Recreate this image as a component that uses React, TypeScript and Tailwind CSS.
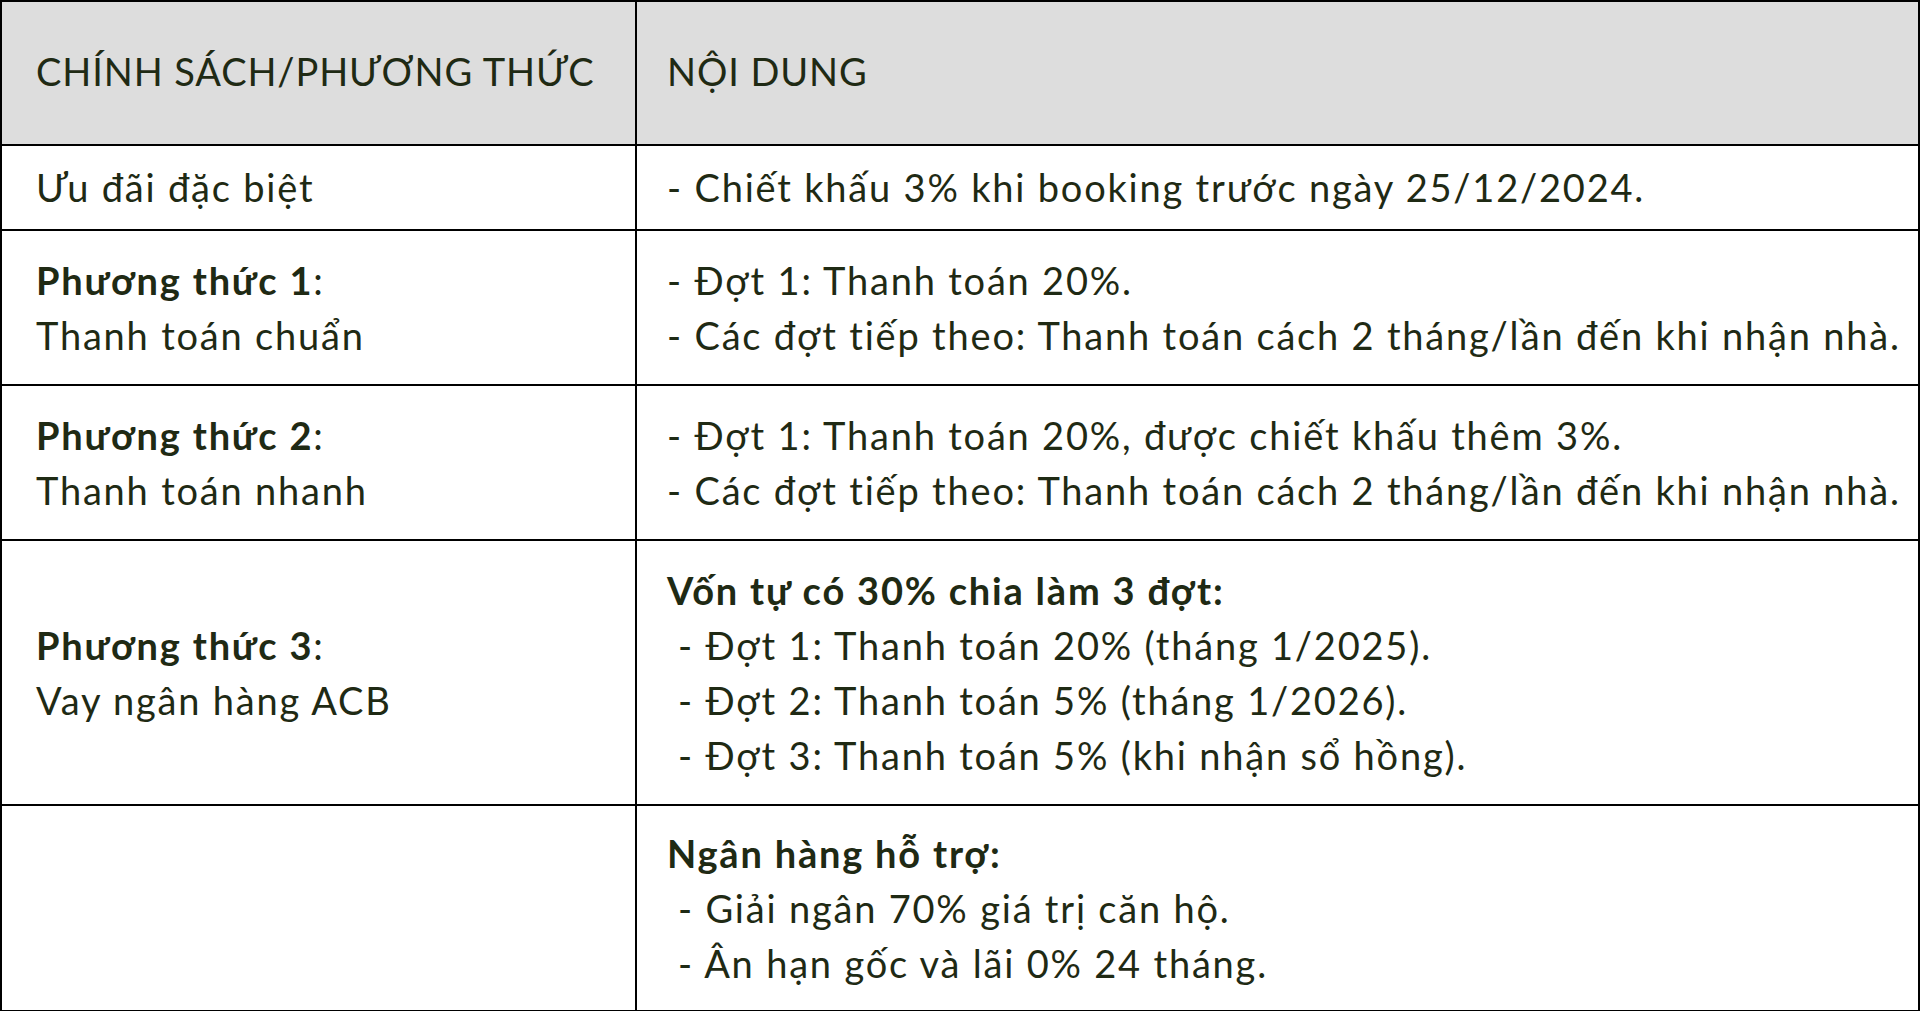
import React from 'react';

const left = 'border-2 border-black pl-[34px] pr-[20px] align-middle whitespace-nowrap';
const right = 'border-2 border-black pl-[30px] pr-[10px] align-middle whitespace-nowrap';
const sub = 'pl-[11px]';

export default function App() {
  return (
    <div className="w-[1920px] h-[1011px] bg-white" style={{ fontFamily: 'Lato, "Noto Sans", sans-serif' }}>
      <table className="w-full border-collapse text-[38px] leading-[55px] tracking-[1.8px] text-[#1f2a14]">
        <colgroup>
          <col className="w-[635px]" />
          <col />
        </colgroup>
        <tbody>
          <tr className="h-[144px] bg-[#dddddd] tracking-[0.9px]">
            <td className={`${left} pb-[4px]`}>CHÍNH SÁCH/PHƯƠNG THỨC</td>
            <td className={`${right} pb-[4px]`}>NỘI DUNG</td>
          </tr>
          <tr className="h-[85px]">
            <td className={left}>Ưu đãi đặc biệt</td>
            <td className={right}>- Chiết khấu 3% khi booking trước ngày 25/12/2024.</td>
          </tr>
          <tr className="h-[155px]">
            <td className={left}>
              <div><b>Phương thức 1</b>:</div>
              <div>Thanh toán chuẩn</div>
            </td>
            <td className={right}>
              <div>- Đợt 1: Thanh toán 20%.</div>
              <div>- Các đợt tiếp theo: Thanh toán cách 2 tháng/lần đến khi nhận nhà.</div>
            </td>
          </tr>
          <tr className="h-[155px]">
            <td className={left}>
              <div><b>Phương thức 2</b>:</div>
              <div>Thanh toán nhanh</div>
            </td>
            <td className={right}>
              <div>- Đợt 1: Thanh toán 20%, được chiết khấu thêm 3%.</div>
              <div>- Các đợt tiếp theo: Thanh toán cách 2 tháng/lần đến khi nhận nhà.</div>
            </td>
          </tr>
          <tr className="h-[265px]">
            <td className={left}>
              <div><b>Phương thức 3</b>:</div>
              <div>Vay ngân hàng ACB</div>
            </td>
            <td className={right}>
              <div className="font-bold">Vốn tự có 30% chia làm 3 đợt:</div>
              <div className={sub}>- Đợt 1: Thanh toán 20% (tháng 1/2025).</div>
              <div className={sub}>- Đợt 2: Thanh toán 5% (tháng 1/2026).</div>
              <div className={sub}>- Đợt 3: Thanh toán 5% (khi nhận sổ hồng).</div>
            </td>
          </tr>
          <tr className="h-[206px]">
            <td className={left}></td>
            <td className={right}>
              <div className="font-bold">Ngân hàng hỗ trợ:</div>
              <div className={sub}>- Giải ngân 70% giá trị căn hộ.</div>
              <div className={sub}>- Ân hạn gốc và lãi 0% 24 tháng.</div>
            </td>
          </tr>
        </tbody>
      </table>
    </div>
  );
}
